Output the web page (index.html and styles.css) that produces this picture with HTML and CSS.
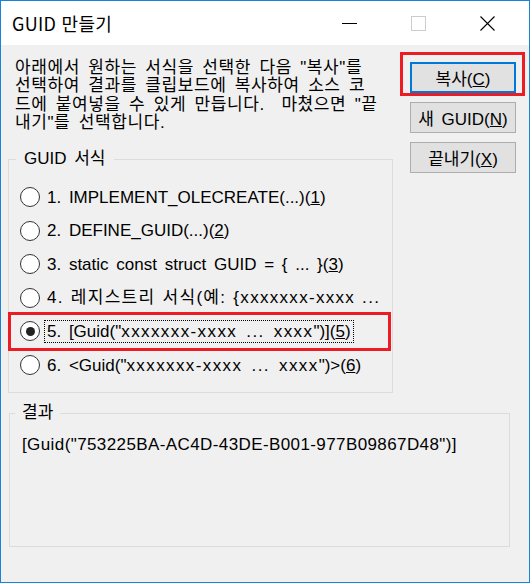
FILE: index.html
```html
<!DOCTYPE html>
<html lang="ko">
<head>
<meta charset="utf-8">
<title>GUID 만들기</title>
<link rel="stylesheet" href="styles.css">
</head>
<body>
<div class="window">
  <div class="titlebar">
    <span class="title">GUID 만들기</span>
    <div class="caption">
      <span class="cap"><svg width="15" height="15" viewBox="0 0 15 15"><path d="M0 7.5H15" stroke="#000" stroke-width="1"/></svg></span>
      <span class="cap"><svg width="15" height="15" viewBox="0 0 15 15"><rect x="0.5" y="0.5" width="14" height="14" fill="none" stroke="#cccccc" stroke-width="1"/></svg></span>
      <span class="cap"><svg width="15" height="15" viewBox="0 0 15 15"><path d="M0.5 0.5L14.5 14.5M14.5 0.5L0.5 14.5" stroke="#000" stroke-width="1.1"/></svg></span>
    </div>
  </div>
  <div class="client">
    <div class="left">
      <p class="intro">아래에서 원하는 서식을 선택한 다음 "복사"를<br>선택하여 결과를 클립보드에 복사하여 소스 코<br>드에 붙여넣을 수 있게 만듭니다.&nbsp; 마쳤으면 "끝<br>내기"를 선택합니다.</p>
      <fieldset class="group format">
        <legend class="legend">GUID 서식</legend>
        <div class="options">
          <div class="option"><span class="radio"></span><span class="label">1. IMPLEMENT_OLECREATE(...)(<u>1</u>)</span></div>
          <div class="option"><span class="radio"></span><span class="label">2. DEFINE_GUID(...)(<u>2</u>)</span></div>
          <div class="option"><span class="radio"></span><span class="label">3. static const struct GUID = { ... }(<u>3</u>)</span></div>
          <div class="option"><span class="radio"></span><span class="label clip">4. 레지스트리 서식(예: {xxxxxxx-xxxx ... xxxx})(<u>4</u>)</span></div>
          <div class="option selected"><span class="radio checked"></span><span class="label focus">5. [Guid("<span class="ph">xxxxxxx-xxxx ... xxxx</span>")](<u>5</u>)</span><div class="mark mark-option"></div></div>
          <div class="option"><span class="radio"></span><span class="label">6. &lt;Guid("<span class="ph">xxxxxxx-xxxx ... xxxx</span>")&gt;(<u>6</u>)</span></div>
        </div>
      </fieldset>
    </div>
    <div class="buttons">
      <div class="btn-wrap">
        <button class="btn default">복사(<u>C</u>)</button>
        <div class="mark mark-copy"></div>
      </div>
      <button class="btn">새 GUID(<u>N</u>)</button>
      <button class="btn">끝내기(<u>X</u>)</button>
    </div>
    <fieldset class="group result">
      <legend class="legend">결과</legend>
      <div class="result-text">[Guid("753225BA-AC4D-43DE-B001-977B09867D48")]</div>
    </fieldset>
  </div>
</div>
</body>
</html>
```
FILE: styles.css
```css
html, body {
  margin: 0;
  padding: 0;
  background: #ffffff;
}

.window {
  width: 530px;
  height: 583px;
  box-sizing: border-box;
  border: 1px solid #1883d7;
  background: #f0f0f0;
  display: flex;
  flex-direction: column;
}

.titlebar {
  height: 44px;
  flex: none;
  background: #ffffff;
  display: flex;
  align-items: center;
}

.title {
  margin-left: 11px;
  font-family: "Noto Sans CJK KR", "Noto Sans", sans-serif;
  font-size: 18px;
  letter-spacing: 0.3px;
  color: #000;
}

.caption {
  margin-left: auto;
  margin-right: 7px;
  display: flex;
}

.cap {
  width: 69px;
  height: 44px;
  display: flex;
  align-items: center;
  justify-content: center;
}

.cap svg {
  display: block;
}

.client {
  flex: 1;
  display: grid;
  grid-template-columns: 392px auto;
  align-content: start;
  font-family: "Liberation Sans", "Noto Sans CJK KR", sans-serif;
  font-size: 17px;
  color: #000;
}

.left {
  padding-left: 7px;
}

.intro {
  margin: 14px 0 0 7px;
  line-height: 18.33px;
  white-space: nowrap;
  word-spacing: 3px;
  letter-spacing: 0.6px;
}

.group {
  margin: 0;
  padding: 0;
  border: 1px solid #dcdcdc;
  min-width: 0;
}

.legend {
  line-height: 20px;
  padding: 0 8px;
  margin-left: 7px;
  word-spacing: 3px;
}

.format {
  width: 385px;
  height: 244px;
  box-sizing: border-box;
  margin-top: 17px;
}

.options {
  padding-top: 11px;
}

.option {
  height: 33.6px;
  display: flex;
  align-items: center;
  white-space: nowrap;
}

.option.selected {
  position: relative;
}

.radio {
  width: 20px;
  height: 20px;
  box-sizing: border-box;
  border: 1px solid #333333;
  border-radius: 50%;
  background: #ffffff;
  margin-left: 11px;
  flex: none;
  display: flex;
  align-items: center;
  justify-content: center;
}

.radio.checked::after {
  content: "";
  width: 9px;
  height: 9px;
  border-radius: 50%;
  background: #222222;
}

.label {
  margin-left: 4px;
  padding: 0 2px;
  border: 1px dotted transparent;
  line-height: 21px;
  word-spacing: 3px;
}

.label.clip {
  width: 330px;
  overflow: hidden;
  letter-spacing: 1.3px;
  word-spacing: 1px;
}

.label.focus {
  border-color: #000000;
}

.ph {
  letter-spacing: 1.4px;
}

.mark {
  position: absolute;
  box-sizing: border-box;
  border: 3px solid #ec1c24;
  pointer-events: none;
}

.mark-option {
  left: -1px;
  top: -3px;
  width: 383px;
  height: 39px;
}

.buttons {
  padding-top: 17px;
  margin-left: 17px;
  display: flex;
  flex-direction: column;
  gap: 9px;
}

.btn-wrap {
  position: relative;
}

.btn {
  display: block;
  width: 106px;
  height: 31px;
  box-sizing: border-box;
  margin: 0;
  padding: 0;
  background: #e1e1e1;
  border: 1px solid #adadad;
  font-family: "Liberation Sans", "Noto Sans CJK KR", sans-serif;
  font-size: 17px;
  color: #000;
  word-spacing: 3px;
}

.btn.default {
  border: 2px solid #0078d7;
}

.mark-copy {
  left: -10px;
  top: -10px;
  width: 125px;
  height: 44px;
}

.result {
  grid-column: 1 / 3;
  margin: 10px 0 0 8px;
  width: 501px;
  height: 144px;
  box-sizing: border-box;
}

.result .legend {
  margin-left: 5px;
  padding: 0 7px;
}

.result-text {
  padding: 12px 0 0 12px;
  line-height: 20px;
  white-space: nowrap;
  letter-spacing: 0.4px;
}
```
